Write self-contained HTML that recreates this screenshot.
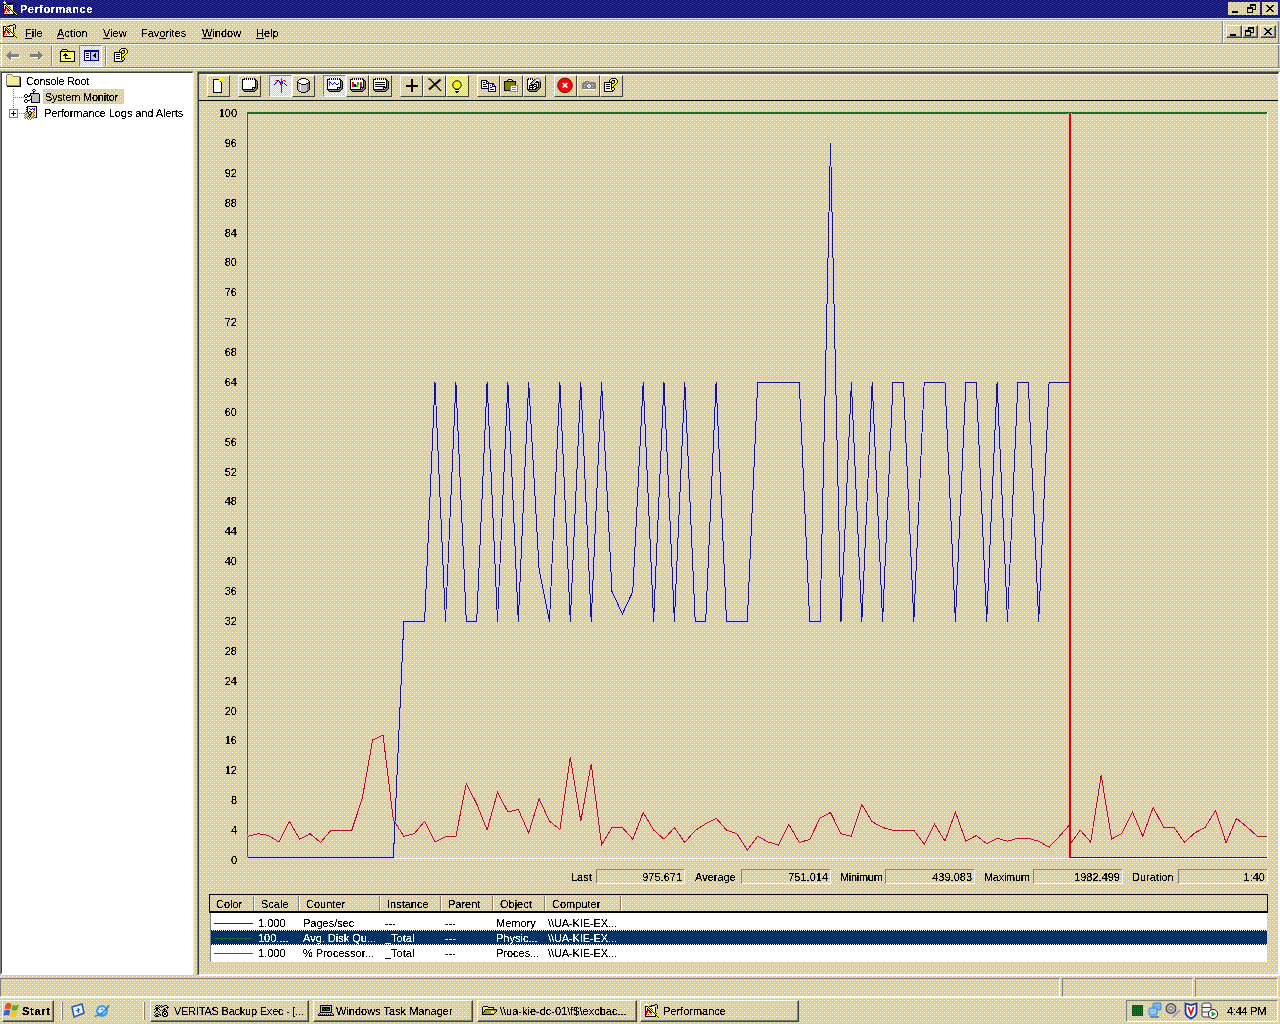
<!DOCTYPE html>
<html><head><meta charset="utf-8"><title>Performance</title>
<style>
html,body{margin:0;padding:0;}
body{width:1280px;height:1024px;overflow:hidden;background:#d4d0c8;font-family:"Liberation Sans",sans-serif;font-size:11px;color:#000;position:relative;}
.abs{position:absolute;}
div{position:absolute;box-sizing:border-box;white-space:nowrap;}
.t{line-height:13px;height:13px;filter:url(#crisp);}
.yl,.sb{filter:url(#crisp);}
u{text-decoration:underline;}
.yl{left:199px;width:38px;text-align:right;height:14px;line-height:14px;}
.raised{border:1px solid;border-color:#fff #404040 #404040 #fff;}
.raised2{border:1px solid;border-color:#fff #808080 #808080 #fff;}
.sunk{border:1px solid;border-color:#808080 #fff #fff #808080;}
.tb{width:23px;height:22px;top:75px;border:1px solid;border-color:#fff #404040 #404040 #fff;}
.tb.p{border-color:#808080 #fff #fff #808080;}
.cap{width:16px;height:13px;border:1px solid;border-color:#fff #404040 #404040 #fff;box-shadow:inset -1px -1px 0 #808080;}
.task{top:1000px;height:22px;border:1px solid;border-color:#fff #404040 #404040 #fff;box-shadow:inset -1px -1px 0 #808080;}
.task .t{top:4px;left:22px;}
.hd{top:896px;height:15px;border-right:1px solid #808080;box-shadow:1px 0 0 #fff;}
.hd .t{top:2px;left:6px;}
.row{left:211px;width:1055px;height:15px;}
.row .t{top:1px;}
.sb{top:869px;height:15px;border:1px solid;border-color:#808080 #fff #fff #808080;text-align:right;padding-right:2px;line-height:14px;}
</style></head>
<body>
<!-- title bar -->
<svg class="abs" style="left:0;top:0" width="1280" height="1024" shape-rendering="crispEdges">
<defs>
<pattern id="dg" width="8" height="8" patternUnits="userSpaceOnUse">
<rect width="8" height="8" fill="#ccc"/>
<path fill="#fff" d="M0 0h1v1h-1zM4 4h1v1h-1z"/>
<path fill="#fcc" d="M2 0h1v1h-1zM6 0h1v1h-1zM2 4h1v1h-1zM6 4h1v1h-1z"/>
<path fill="#ff9" d="M4 0h1v1h-1zM2 2h1v1h-1zM6 2h1v1h-1zM0 4h1v1h-1zM2 6h1v1h-1zM6 6h1v1h-1z"/>
</pattern>
<pattern id="dn" width="4" height="2" patternUnits="userSpaceOnUse">
<rect width="4" height="2" fill="#036"/>
<path fill="#339" d="M0 0h1v1h-1zM2 1h1v1h-1z"/>
<path fill="#006" d="M2 0h1v1h-1zM0 1h1v1h-1z"/>
</pattern>
<pattern id="dc" width="2" height="2" patternUnits="userSpaceOnUse"><rect width="2" height="2" fill="#ccc"/><path fill="#fff" d="M0 0h1v1h-1zM1 1h1v1h-1z"/></pattern>
<pattern id="dy" width="2" height="2" patternUnits="userSpaceOnUse"><rect width="2" height="2" fill="#ccc"/><path fill="#ff9" d="M0 0h1v1h-1zM1 1h1v1h-1z"/></pattern>
<filter id="crisp" x="0" y="0" width="100%" height="100%" color-interpolation-filters="sRGB"><feComponentTransfer><feFuncA type="linear" slope="9" intercept="-3.2"/></feComponentTransfer></filter>
</defs>
<rect width="1280" height="1024" fill="url(#dg)"/>
<rect width="1280" height="18" fill="url(#dn)"/>
</svg>

<div class="t" style="left:20px;top:3px;color:#fff;font-weight:bold;letter-spacing:0.5px;">Performance</div>
<div class="cap" style="left:1228px;top:2px;"></div>
<div class="cap" style="left:1244px;top:2px;"></div>
<div class="cap" style="left:1262px;top:2px;"></div>
<!-- menu bar -->
<div class="t" style="left:25px;top:27px;"><u>F</u>ile</div>
<div class="t" style="left:57px;top:27px;"><u>A</u>ction</div>
<div class="t" style="left:103px;top:27px;"><u>V</u>iew</div>
<div class="t" style="left:141px;top:27px;">Fav<u>o</u>rites</div>
<div class="t" style="left:202px;top:27px;"><u>W</u>indow</div>
<div class="t" style="left:256px;top:27px;"><u>H</u>elp</div>
<div class="cap" style="left:1226px;top:25px;"></div>
<div class="cap" style="left:1242px;top:25px;"></div>
<div class="cap" style="left:1260px;top:25px;"></div>
<div style="left:1222px;top:20px;width:1px;height:23px;background:#808080;"></div><div style="left:1278px;top:20px;width:1px;height:48px;background:#808080;"></div>
<div style="left:1223px;top:20px;width:1px;height:23px;background:#fff;"></div>
<div style="left:0;top:18px;width:1280px;height:1px;background:#ccdcf8;"></div><div style="left:0;top:19px;width:1280px;height:1px;background:#999988;"></div>
<div style="left:1px;top:20px;width:1279px;height:1px;background:#fff;"></div>
<div style="left:1px;top:20px;width:1px;height:23px;background:#fff;"></div>
<div style="left:0;top:43px;width:1280px;height:1px;background:#808080;"></div>
<div style="left:1px;top:44px;width:1279px;height:1px;background:#fff;"></div>
<div style="left:1px;top:44px;width:1px;height:23px;background:#fff;"></div>
<!-- toolbar -->
<div style="left:0;top:67px;width:1280px;height:1px;background:#808080;"></div>
<div style="left:0;top:68px;width:1280px;height:1px;background:#fff;"></div>
<div style="left:79px;top:45px;width:23px;height:22px;border:1px solid;border-color:#808080 #fff #fff #808080;"></div>
<div style="left:51px;top:46px;width:1px;height:20px;background:#808080;"></div><div style="left:52px;top:46px;width:1px;height:20px;background:#fff;"></div>
<div style="left:105px;top:46px;width:1px;height:20px;background:#808080;"></div><div style="left:106px;top:46px;width:1px;height:20px;background:#fff;"></div>
<!-- left pane -->
<div style="left:0;top:71px;width:193px;height:904px;background:#fff;border:2px solid;border-color:#808080 #fff transparent #808080;border-right-width:0;"></div>
<div style="left:1px;top:72px;width:192px;height:902px;border:1px solid;border-color:#404040 #fff #fff #404040;"></div>
<svg class="abs" style="left:0;top:0" width="1280" height="130" shape-rendering="crispEdges">
<rect x="43" y="89" width="81" height="15" fill="url(#dg)"/>
<rect x="1228" y="2" width="16" height="13" fill="url(#dg)"/><rect x="1244" y="2" width="16" height="13" fill="url(#dg)"/><rect x="1262" y="2" width="16" height="13" fill="url(#dg)"/>
<rect x="80" y="46" width="21" height="20" fill="url(#dc)"/>
<rect x="270" y="76" width="21" height="20" fill="url(#dc)"/>
<rect x="324" y="76" width="21" height="20" fill="url(#dc)"/>
<rect x="447" y="76" width="21" height="20" fill="url(#dy)"/>
</svg>
<div class="t" style="left:26px;top:75px;letter-spacing:-0.3px;">Console Root</div>
<div class="t" style="left:45px;top:91px;letter-spacing:-0.25px;">System Monitor</div>
<div class="t" style="left:44px;top:107px;letter-spacing:-0.1px;">Performance Logs and Alerts</div>
<!-- right pane frame -->
<div style="left:197px;top:71px;width:1083px;height:905px;border:2px solid;border-color:#808080 #fff #fff #808080;"></div>
<div style="left:198px;top:72px;width:1081px;height:903px;border:1px solid;border-color:#404040 transparent transparent #404040;border-top-width:2px;"></div>
<div style="left:199px;top:100px;width:1079px;height:1px;background:#000;"></div>
<div style="left:200px;top:74px;width:1078px;height:1px;background:#fff;opacity:0.75;"></div>
<div style="left:193px;top:73px;width:1px;height:900px;background:#fff;opacity:0.6;"></div>
<!-- right toolbar buttons -->
<div class="tb" style="left:207px"></div>
<div class="tb" style="left:238px"></div>
<div class="tb p" style="left:269px"></div>
<div class="tb" style="left:292px"></div>
<div class="tb p" style="left:323px"></div>
<div class="tb" style="left:346px"></div>
<div class="tb" style="left:369px"></div>
<div class="tb" style="left:400px"></div>
<div class="tb" style="left:423px"></div>
<div class="tb" style="left:446px;"></div>
<div class="tb" style="left:477px"></div>
<div class="tb" style="left:500px"></div>
<div class="tb" style="left:523px"></div>
<div class="tb" style="left:554px"></div>
<div class="tb" style="left:577px"></div>
<div class="tb" style="left:600px"></div>
<!-- chart -->
<div class="yl" style="top:853px">0</div><div class="yl" style="top:823px">4</div><div class="yl" style="top:793px">8</div><div class="yl" style="top:763px">12</div><div class="yl" style="top:733px">16</div><div class="yl" style="top:704px">20</div><div class="yl" style="top:674px">24</div><div class="yl" style="top:644px">28</div><div class="yl" style="top:614px">32</div><div class="yl" style="top:584px">36</div><div class="yl" style="top:554px">40</div><div class="yl" style="top:524px">44</div><div class="yl" style="top:494px">48</div><div class="yl" style="top:465px">52</div><div class="yl" style="top:435px">56</div><div class="yl" style="top:405px">60</div><div class="yl" style="top:375px">64</div><div class="yl" style="top:345px">68</div><div class="yl" style="top:315px">72</div><div class="yl" style="top:285px">76</div><div class="yl" style="top:255px">80</div><div class="yl" style="top:226px">84</div><div class="yl" style="top:196px">88</div><div class="yl" style="top:166px">92</div><div class="yl" style="top:136px">96</div><div class="yl" style="top:106px">100</div>
<svg class="abs" style="left:0;top:0" width="1280" height="1024" viewBox="0 0 1280 1024" shape-rendering="crispEdges">
<rect x="247" y="112" width="1" height="746" fill="#5a4a42"/>
<rect x="247" y="858" width="1021" height="1" fill="#fff"/>
<rect x="1267" y="112" width="1" height="747" fill="#fff"/>
<rect x="248" y="112" width="1019" height="2" fill="#1c6a30"/>
<polyline points="247.5,836.3 258.1,833.75 268.5,835.5 278.9,842 289.3,821.25 299.7,839.25 310.1,833.75 320.6,842.5 331.0,830.25 341.4,830.25 351.8,830.25 362.2,798.75 372.6,740 383.0,735 393.4,820 403.8,836.25 414.2,833.75 424.6,821.25 435.0,842 445.5,836.75 455.9,836.25 466.3,783.75 476.7,803.75 487.1,830 497.5,792.5 507.9,812 518.3,809.5 528.7,833 539.1,798.75 549.5,821.25 559.9,829.5 570.3,757.5 580.8,821.25 591.2,763.75 601.6,845 612.0,827.5 622.4,827.5 632.8,839.25 643.2,812.5 653.6,830 664.0,839.25 674.4,827.5 684.8,842.5 695.2,830.5 705.7,823.75 716.1,818.25 726.5,830 736.9,833.75 747.3,850 757.7,836.25 768.1,842 778.5,845 788.9,824.5 799.3,842.5 809.7,839.5 820.1,818 830.5,812.5 841.0,833.75 851.4,836.25 861.8,804.5 872.2,821.75 882.6,827.5 893.0,830.25 903.4,830.25 913.8,830.25 924.2,844.25 934.6,824.25 945.0,841.25 955.4,812 965.9,841.25 976.3,835.5 986.7,843.75 997.1,838.25 1007.5,841.25 1017.9,838.25 1028.3,838.25 1038.7,841.25 1049.1,847.25 1059.5,836.25 1069.5,825" fill="none" stroke="#ffc4c4" stroke-width="3" opacity="0.75" shape-rendering="auto"/>
<polyline points="1071,842.8 1080.3,830.25 1090.7,842.25 1101.2,775.3 1111.6,839 1122.0,833.4 1132.4,811.9 1142.8,836.25 1153.2,807.2 1163.6,827.25 1174.0,827.25 1184.4,842.25 1194.8,833 1205.2,827.25 1215.6,810.6 1226.1,842.8 1236.5,818.4 1246.9,826.9 1257.3,836.25 1267,836.6" fill="none" stroke="#ffc4c4" stroke-width="3" opacity="0.75" shape-rendering="auto"/>
<polyline points="247.5,857.5 258.1,857.5 268.5,857.5 278.9,857.5 289.3,857.5 299.7,857.5 310.1,857.5 320.6,857.5 331.0,857.5 341.4,857.5 351.8,857.5 362.2,857.5 372.6,857.5 383.0,857.5 393.4,857.5 403.8,621.5 414.2,621.5 424.6,621.5 435.0,382.4 445.5,621.5 455.9,382.4 466.3,621.5 476.7,621.5 487.1,382.4 497.5,621.5 507.9,382.4 518.3,621.5 528.7,382.4 539.1,569.2 549.5,621.5 559.9,382.4 570.3,621.5 580.8,382.4 591.2,621.5 601.6,382.4 612.0,591.6 622.4,614.0 632.8,591.6 643.2,382.4 653.6,621.5 664.0,382.4 674.4,621.5 684.8,382.4 695.2,621.5 705.7,621.5 716.1,382.4 726.5,621.5 736.9,621.5 747.3,621.5 757.7,382.4 768.1,382.4 778.5,382.4 788.9,382.4 799.3,382.4 809.7,621.5 820.1,621.5 830.5,143.4 841.0,621.5 851.4,382.4 861.8,621.5 872.2,382.4 882.6,621.5 893.0,382.4 903.4,382.4 913.8,621.5 924.2,382.4 934.6,382.4 945.0,382.4 955.4,621.5 965.9,382.4 976.3,382.4 986.7,621.5 997.1,382.4 1007.5,621.5 1017.9,382.4 1028.3,382.4 1038.7,621.5 1049.1,382.4 1059.5,382.4 1070,382.4" fill="none" stroke="#ccccff" stroke-width="3" opacity="0.8" shape-rendering="auto"/>
<rect x="1068" y="113" width="4" height="745" fill="#ffb8b8" opacity="0.8"/>
<polyline points="247.5,836.3 258.1,833.75 268.5,835.5 278.9,842 289.3,821.25 299.7,839.25 310.1,833.75 320.6,842.5 331.0,830.25 341.4,830.25 351.8,830.25 362.2,798.75 372.6,740 383.0,735 393.4,820 403.8,836.25 414.2,833.75 424.6,821.25 435.0,842 445.5,836.75 455.9,836.25 466.3,783.75 476.7,803.75 487.1,830 497.5,792.5 507.9,812 518.3,809.5 528.7,833 539.1,798.75 549.5,821.25 559.9,829.5 570.3,757.5 580.8,821.25 591.2,763.75 601.6,845 612.0,827.5 622.4,827.5 632.8,839.25 643.2,812.5 653.6,830 664.0,839.25 674.4,827.5 684.8,842.5 695.2,830.5 705.7,823.75 716.1,818.25 726.5,830 736.9,833.75 747.3,850 757.7,836.25 768.1,842 778.5,845 788.9,824.5 799.3,842.5 809.7,839.5 820.1,818 830.5,812.5 841.0,833.75 851.4,836.25 861.8,804.5 872.2,821.75 882.6,827.5 893.0,830.25 903.4,830.25 913.8,830.25 924.2,844.25 934.6,824.25 945.0,841.25 955.4,812 965.9,841.25 976.3,835.5 986.7,843.75 997.1,838.25 1007.5,841.25 1017.9,838.25 1028.3,838.25 1038.7,841.25 1049.1,847.25 1059.5,836.25 1069.5,825" fill="none" stroke="#a81424" stroke-width="1" shape-rendering="crispEdges"/>
<polyline points="1071,842.8 1080.3,830.25 1090.7,842.25 1101.2,775.3 1111.6,839 1122.0,833.4 1132.4,811.9 1142.8,836.25 1153.2,807.2 1163.6,827.25 1174.0,827.25 1184.4,842.25 1194.8,833 1205.2,827.25 1215.6,810.6 1226.1,842.8 1236.5,818.4 1246.9,826.9 1257.3,836.25 1267,836.6" fill="none" stroke="#a81424" stroke-width="1" shape-rendering="crispEdges"/>
<polyline points="247.5,857.5 258.1,857.5 268.5,857.5 278.9,857.5 289.3,857.5 299.7,857.5 310.1,857.5 320.6,857.5 331.0,857.5 341.4,857.5 351.8,857.5 362.2,857.5 372.6,857.5 383.0,857.5 393.4,857.5 403.8,621.5 414.2,621.5 424.6,621.5 435.0,382.4 445.5,621.5 455.9,382.4 466.3,621.5 476.7,621.5 487.1,382.4 497.5,621.5 507.9,382.4 518.3,621.5 528.7,382.4 539.1,569.2 549.5,621.5 559.9,382.4 570.3,621.5 580.8,382.4 591.2,621.5 601.6,382.4 612.0,591.6 622.4,614.0 632.8,591.6 643.2,382.4 653.6,621.5 664.0,382.4 674.4,621.5 684.8,382.4 695.2,621.5 705.7,621.5 716.1,382.4 726.5,621.5 736.9,621.5 747.3,621.5 757.7,382.4 768.1,382.4 778.5,382.4 788.9,382.4 799.3,382.4 809.7,621.5 820.1,621.5 830.5,143.4 841.0,621.5 851.4,382.4 861.8,621.5 872.2,382.4 882.6,621.5 893.0,382.4 903.4,382.4 913.8,621.5 924.2,382.4 934.6,382.4 945.0,382.4 955.4,621.5 965.9,382.4 976.3,382.4 986.7,621.5 997.1,382.4 1007.5,621.5 1017.9,382.4 1028.3,382.4 1038.7,621.5 1049.1,382.4 1059.5,382.4 1070,382.4" fill="none" stroke="#141488" stroke-width="1" shape-rendering="crispEdges"/>
<rect x="1071" y="857" width="196" height="1" fill="#141488"/>
<rect x="1069" y="113" width="2" height="745" fill="#cc0808"/>
</svg>
<!-- stats row -->
<div class="t" style="left:571px;top:871px;">Last</div>
<div class="sb" style="left:596px;width:89px;">975.671</div>
<div class="t" style="left:695px;top:871px;">Average</div>
<div class="sb" style="left:741px;width:90px;">751.014</div>
<div class="t" style="left:840px;top:871px;letter-spacing:-0.3px;">Minimum</div>
<div class="sb" style="left:885px;width:90px;">439.083</div>
<div class="t" style="left:984px;top:871px;letter-spacing:-0.3px;">Maximum</div>
<div class="sb" style="left:1033px;width:90px;">1982.499</div>
<div class="t" style="left:1132px;top:871px;">Duration</div>
<div class="sb" style="left:1178px;width:90px;">1:40</div>
<!-- legend -->
<div style="left:209px;top:894px;width:1059px;height:19px;border:1px solid #000;border-bottom:2px solid #000;"></div>
<div class="hd" style="left:210px;width:44px;"><div class="t">Color</div></div>
<div class="hd" style="left:255px;width:44px;"><div class="t">Scale</div></div>
<div class="hd" style="left:300px;width:80px;"><div class="t">Counter</div></div>
<div class="hd" style="left:381px;width:60px;"><div class="t">Instance</div></div>
<div class="hd" style="left:442px;width:51px;"><div class="t">Parent</div></div>
<div class="hd" style="left:494px;width:51px;"><div class="t">Object</div></div>
<div class="hd" style="left:546px;width:75px;"><div class="t">Computer</div></div>
<div style="left:210px;top:913px;width:1057px;height:49px;background:#fff;border-left:1px solid #808080;"></div>
<div class="row" style="top:916px;">
 <div style="left:3px;top:7px;width:39px;height:1px;background:#1c1c8c;"></div>
 <div class="t" style="left:47px;">1.000</div><div class="t" style="left:92px;">Pages/sec</div><div class="t" style="left:174px;">---</div><div class="t" style="left:234px;">---</div><div class="t" style="left:285px;">Memory</div><div class="t" style="left:337px;letter-spacing:-0.1px;">\\UA-KIE-EX...</div>
</div>
<svg class="abs" style="left:211px;top:930px" width="1056" height="15" shape-rendering="crispEdges"><defs><pattern id="dd" width="2" height="1" patternUnits="userSpaceOnUse"><rect width="1" height="1" fill="#000"/><rect x="1" width="1" height="1" fill="#fff"/></pattern></defs><rect width="1056" height="15" fill="url(#dn)"/><rect width="1056" height="1" fill="url(#dd)"/><rect y="14" width="1056" height="1" fill="url(#dd)"/></svg>
<div class="row" style="top:930px;color:#fff;height:15px;">
 <div style="left:3px;top:8px;width:39px;height:1px;background:#1c6a30;"></div>
 <div class="t" style="left:47px;top:2px;">100....</div><div class="t" style="left:92px;top:2px;">Avg. Disk Qu...</div><div class="t" style="left:174px;top:2px;">_Total</div><div class="t" style="left:234px;top:2px;">---</div><div class="t" style="left:285px;top:2px;">Physic...</div><div class="t" style="left:337px;top:2px;letter-spacing:-0.1px;">\\UA-KIE-EX...</div>
</div>
<div class="row" style="top:946px;">
 <div style="left:3px;top:7px;width:39px;height:1px;background:#b02028;"></div>
 <div class="t" style="left:47px;">1.000</div><div class="t" style="left:92px;">% Processor...</div><div class="t" style="left:174px;">_Total</div><div class="t" style="left:234px;">---</div><div class="t" style="left:285px;">Proces...</div><div class="t" style="left:337px;letter-spacing:-0.1px;">\\UA-KIE-EX...</div>
</div>
<svg class="abs" style="left:1px;top:1px" width="16" height="15" shape-rendering="crispEdges"><path fill="#fff" d="M3 0h1v1h-1zM2 1h1v1h-1zM4 1h1v1h-1zM3 2h1v1h-1zM3 4h2v1h-2zM7 4h5v1h-5zM3 5h1v1h-1zM5 5h1v1h-1zM9 5h3v1h-3zM3 6h1v1h-1zM6 6h1v1h-1zM10 6h2v1h-2zM3 7h1v1h-1zM7 7h1v1h-1zM10 7h2v1h-2zM5 8h1v1h-1zM8 8h1v1h-1zM11 8h1v1h-1zM5 9h1v1h-1zM9 9h1v1h-1zM4 10h3v1h-3zM8 10h3v1h-3zM4 11h1v1h-1zM6 11h2v1h-2zM9 11h3v1h-3zM3 12h9v1h-9z"/><path fill="#ffc0c0" d="M3 1h1v1h-1z"/><path fill="#000" d="M12 1h2v1h-2zM8 2h4v1h-4zM14 2h1v1h-1zM2 3h3v1h-3zM6 3h3v1h-3zM14 3h1v1h-1zM2 4h1v1h-1zM5 4h1v1h-1zM12 4h1v1h-1zM14 4h1v1h-1zM2 5h1v1h-1zM6 5h1v1h-1zM12 5h1v1h-1zM14 5h1v1h-1zM2 6h1v1h-1zM7 6h1v1h-1zM12 6h1v1h-1zM2 7h1v1h-1zM8 7h1v1h-1zM12 7h1v1h-1zM2 8h1v1h-1zM9 8h1v1h-1zM12 8h1v1h-1zM2 9h1v1h-1zM10 9h1v1h-1zM12 9h1v1h-1zM2 10h1v1h-1zM11 10h1v1h-1zM13 10h1v1h-1zM2 11h1v1h-1zM12 11h1v1h-1zM2 12h1v1h-1zM12 12h2v1h-2zM2 13h11v1h-11zM14 13h1v1h-1zM15 14h1v1h-1z"/><path fill="#ffff00" d="M4 2h1v1h-1zM5 3h1v1h-1zM6 4h1v1h-1zM7 5h1v1h-1zM8 6h1v1h-1zM9 7h1v1h-1zM10 8h1v1h-1zM11 9h1v1h-1zM12 10h1v1h-1zM13 11h1v1h-1zM14 12h1v1h-1zM15 13h1v1h-1z"/><path fill="#000080" d="M4 5h1v1h-1zM4 6h1v1h-1zM4 7h1v1h-1zM6 7h1v1h-1zM3 8h1v1h-1zM7 8h1v1h-1zM8 9h1v1h-1z"/><path fill="#ff0000" d="M8 5h1v1h-1zM5 6h1v1h-1zM9 6h1v1h-1zM5 7h1v1h-1zM4 8h1v1h-1zM6 8h1v1h-1zM3 9h2v1h-2zM6 9h2v1h-2zM3 10h1v1h-1zM7 10h1v1h-1zM3 11h1v1h-1zM5 11h1v1h-1zM8 11h1v1h-1z"/></svg>
<svg class="abs" style="left:1px;top:23px" width="16" height="15" shape-rendering="crispEdges"><path fill="#fff" d="M3 0h1v1h-1zM2 1h1v1h-1zM4 1h1v1h-1zM3 2h1v1h-1zM3 4h2v1h-2zM7 4h5v1h-5zM3 5h1v1h-1zM5 5h1v1h-1zM9 5h3v1h-3zM3 6h1v1h-1zM6 6h1v1h-1zM10 6h2v1h-2zM3 7h1v1h-1zM7 7h1v1h-1zM10 7h2v1h-2zM5 8h1v1h-1zM8 8h1v1h-1zM11 8h1v1h-1zM5 9h1v1h-1zM9 9h1v1h-1zM4 10h3v1h-3zM8 10h3v1h-3zM4 11h1v1h-1zM6 11h2v1h-2zM9 11h3v1h-3zM3 12h9v1h-9z"/><path fill="#ffc0c0" d="M3 1h1v1h-1z"/><path fill="#000" d="M12 1h2v1h-2zM8 2h4v1h-4zM14 2h1v1h-1zM2 3h3v1h-3zM6 3h3v1h-3zM14 3h1v1h-1zM2 4h1v1h-1zM5 4h1v1h-1zM12 4h1v1h-1zM14 4h1v1h-1zM2 5h1v1h-1zM6 5h1v1h-1zM12 5h1v1h-1zM14 5h1v1h-1zM2 6h1v1h-1zM7 6h1v1h-1zM12 6h1v1h-1zM2 7h1v1h-1zM8 7h1v1h-1zM12 7h1v1h-1zM2 8h1v1h-1zM9 8h1v1h-1zM12 8h1v1h-1zM2 9h1v1h-1zM10 9h1v1h-1zM12 9h1v1h-1zM2 10h1v1h-1zM11 10h1v1h-1zM13 10h1v1h-1zM2 11h1v1h-1zM12 11h1v1h-1zM2 12h1v1h-1zM12 12h2v1h-2zM2 13h11v1h-11zM14 13h1v1h-1zM15 14h1v1h-1z"/><path fill="#ffff00" d="M4 2h1v1h-1zM5 3h1v1h-1zM6 4h1v1h-1zM7 5h1v1h-1zM8 6h1v1h-1zM9 7h1v1h-1zM10 8h1v1h-1zM11 9h1v1h-1zM12 10h1v1h-1zM13 11h1v1h-1zM14 12h1v1h-1zM15 13h1v1h-1z"/><path fill="#000080" d="M4 5h1v1h-1zM4 6h1v1h-1zM4 7h1v1h-1zM6 7h1v1h-1zM3 8h1v1h-1zM7 8h1v1h-1zM8 9h1v1h-1z"/><path fill="#ff0000" d="M8 5h1v1h-1zM5 6h1v1h-1zM9 6h1v1h-1zM5 7h1v1h-1zM4 8h1v1h-1zM6 8h1v1h-1zM3 9h2v1h-2zM6 9h2v1h-2zM3 10h1v1h-1zM7 10h1v1h-1zM3 11h1v1h-1zM5 11h1v1h-1zM8 11h1v1h-1z"/></svg>
<svg class="abs" style="left:643px;top:1003px" width="16" height="15" shape-rendering="crispEdges"><path fill="#fff" d="M3 0h1v1h-1zM2 1h1v1h-1zM4 1h1v1h-1zM3 2h1v1h-1zM3 4h2v1h-2zM7 4h5v1h-5zM3 5h1v1h-1zM5 5h1v1h-1zM9 5h3v1h-3zM3 6h1v1h-1zM6 6h1v1h-1zM10 6h2v1h-2zM3 7h1v1h-1zM7 7h1v1h-1zM10 7h2v1h-2zM5 8h1v1h-1zM8 8h1v1h-1zM11 8h1v1h-1zM5 9h1v1h-1zM9 9h1v1h-1zM4 10h3v1h-3zM8 10h3v1h-3zM4 11h1v1h-1zM6 11h2v1h-2zM9 11h3v1h-3zM3 12h9v1h-9z"/><path fill="#ffc0c0" d="M3 1h1v1h-1z"/><path fill="#000" d="M12 1h2v1h-2zM8 2h4v1h-4zM14 2h1v1h-1zM2 3h3v1h-3zM6 3h3v1h-3zM14 3h1v1h-1zM2 4h1v1h-1zM5 4h1v1h-1zM12 4h1v1h-1zM14 4h1v1h-1zM2 5h1v1h-1zM6 5h1v1h-1zM12 5h1v1h-1zM14 5h1v1h-1zM2 6h1v1h-1zM7 6h1v1h-1zM12 6h1v1h-1zM2 7h1v1h-1zM8 7h1v1h-1zM12 7h1v1h-1zM2 8h1v1h-1zM9 8h1v1h-1zM12 8h1v1h-1zM2 9h1v1h-1zM10 9h1v1h-1zM12 9h1v1h-1zM2 10h1v1h-1zM11 10h1v1h-1zM13 10h1v1h-1zM2 11h1v1h-1zM12 11h1v1h-1zM2 12h1v1h-1zM12 12h2v1h-2zM2 13h11v1h-11zM14 13h1v1h-1zM15 14h1v1h-1z"/><path fill="#ffff00" d="M4 2h1v1h-1zM5 3h1v1h-1zM6 4h1v1h-1zM7 5h1v1h-1zM8 6h1v1h-1zM9 7h1v1h-1zM10 8h1v1h-1zM11 9h1v1h-1zM12 10h1v1h-1zM13 11h1v1h-1zM14 12h1v1h-1zM15 13h1v1h-1z"/><path fill="#000080" d="M4 5h1v1h-1zM4 6h1v1h-1zM4 7h1v1h-1zM6 7h1v1h-1zM3 8h1v1h-1zM7 8h1v1h-1zM8 9h1v1h-1z"/><path fill="#ff0000" d="M8 5h1v1h-1zM5 6h1v1h-1zM9 6h1v1h-1zM5 7h1v1h-1zM4 8h1v1h-1zM6 8h1v1h-1zM3 9h2v1h-2zM6 9h2v1h-2zM3 10h1v1h-1zM7 10h1v1h-1zM3 11h1v1h-1zM5 11h1v1h-1zM8 11h1v1h-1z"/></svg>
<svg class="abs" style="left:6px;top:51px" width="14" height="10" shape-rendering="crispEdges"><path fill="#808080" d="M4 0h1v1h-1zM3 1h2v1h-2zM2 2h3v1h-3zM1 3h12v1h-12zM0 4h13v1h-13zM1 5h12v1h-12zM2 6h3v1h-3zM3 7h2v1h-2zM4 8h1v1h-1z"/><path fill="#fff" d="M13 4h1v1h-1zM13 5h1v1h-1zM5 6h9v1h-9zM5 7h1v1h-1zM5 8h1v1h-1zM5 9h1v1h-1z"/></svg>
<svg class="abs" style="left:29px;top:51px" width="14" height="10" shape-rendering="crispEdges"><path fill="#808080" d="M9 0h1v1h-1zM9 1h2v1h-2zM9 2h3v1h-3zM1 3h12v1h-12zM1 4h13v1h-13zM1 5h12v1h-12zM9 6h3v1h-3zM9 7h2v1h-2zM9 8h1v1h-1z"/><path fill="#fff" d="M13 5h1v1h-1zM2 6h7v1h-7zM12 6h1v1h-1zM11 7h1v1h-1zM10 8h1v1h-1zM9 9h1v1h-1z"/></svg>
<svg class="abs" style="left:60px;top:49px" width="16" height="13" shape-rendering="crispEdges"><path fill="#000" d="M2 0h5v1h-5zM1 1h1v1h-1zM7 1h1v1h-1zM0 2h15v1h-15zM0 3h1v1h-1zM14 3h1v1h-1zM0 4h1v1h-1zM5 4h1v1h-1zM14 4h1v1h-1zM0 5h1v1h-1zM4 5h3v1h-3zM14 5h1v1h-1zM0 6h1v1h-1zM3 6h5v1h-5zM14 6h1v1h-1zM0 7h1v1h-1zM5 7h1v1h-1zM14 7h1v1h-1zM0 8h1v1h-1zM5 8h1v1h-1zM14 8h1v1h-1zM0 9h1v1h-1zM5 9h6v1h-6zM14 9h1v1h-1zM0 10h1v1h-1zM14 10h1v1h-1zM0 11h1v1h-1zM14 11h1v1h-1zM0 12h15v1h-15z"/><path fill="#fbfb78" d="M2 1h5v1h-5zM1 3h13v1h-13zM1 4h4v1h-4zM6 4h8v1h-8zM1 5h3v1h-3zM7 5h7v1h-7zM1 6h2v1h-2zM8 6h6v1h-6zM1 7h4v1h-4zM6 7h8v1h-8zM1 8h4v1h-4zM6 8h8v1h-8zM1 9h4v1h-4zM11 9h3v1h-3zM1 10h13v1h-13zM1 11h13v1h-13z"/></svg>
<svg class="abs" style="left:84px;top:50px" width="15" height="11" shape-rendering="crispEdges"><path fill="#000080" d="M0 0h15v1h-15zM0 1h15v1h-15zM0 2h1v1h-1zM6 2h1v1h-1zM14 2h1v1h-1zM0 3h1v1h-1zM6 3h1v1h-1zM14 3h1v1h-1zM0 4h1v1h-1zM6 4h1v1h-1zM14 4h1v1h-1zM0 5h1v1h-1zM6 5h1v1h-1zM14 5h1v1h-1zM0 6h1v1h-1zM6 6h1v1h-1zM14 6h1v1h-1zM0 7h1v1h-1zM6 7h1v1h-1zM14 7h1v1h-1zM0 8h1v1h-1zM6 8h1v1h-1zM14 8h1v1h-1zM0 9h1v1h-1zM6 9h1v1h-1zM14 9h1v1h-1zM0 10h15v1h-15z"/><path fill="#fff" d="M1 2h5v1h-5zM1 3h1v1h-1zM5 3h1v1h-1zM1 4h5v1h-5zM1 5h1v1h-1zM5 5h1v1h-1zM1 6h5v1h-5zM1 7h1v1h-1zM5 7h1v1h-1zM1 8h5v1h-5zM1 9h5v1h-5z"/><path fill="#c4c4dc" d="M7 2h7v1h-7zM7 3h4v1h-4zM12 3h2v1h-2zM7 4h3v1h-3zM12 4h2v1h-2zM7 5h2v1h-2zM12 5h2v1h-2zM7 6h3v1h-3zM12 6h2v1h-2zM7 7h4v1h-4zM12 7h2v1h-2zM7 8h7v1h-7zM7 9h7v1h-7z"/><path fill="#000" d="M2 3h3v1h-3zM11 3h1v1h-1zM10 4h2v1h-2zM2 5h3v1h-3zM9 5h3v1h-3zM10 6h2v1h-2zM2 7h3v1h-3zM11 7h1v1h-1z"/></svg>
<svg class="abs" style="left:114px;top:48px" width="16" height="14" shape-rendering="crispEdges"><path fill="#000" d="M7 0h5v1h-5zM6 1h1v1h-1zM12 1h1v1h-1zM5 2h1v1h-1zM8 2h3v1h-3zM13 2h1v1h-1zM5 3h1v1h-1zM7 3h1v1h-1zM10 3h1v1h-1zM13 3h1v1h-1zM0 4h8v1h-8zM10 4h1v1h-1zM13 4h1v1h-1zM0 5h1v1h-1zM7 5h3v1h-3zM12 5h1v1h-1zM0 6h1v1h-1zM2 6h4v1h-4zM7 6h1v1h-1zM11 6h1v1h-1zM0 7h1v1h-1zM7 7h1v1h-1zM10 7h1v1h-1zM0 8h1v1h-1zM2 8h4v1h-4zM7 8h1v1h-1zM9 8h1v1h-1zM0 9h1v1h-1zM7 9h3v1h-3zM0 10h1v1h-1zM2 10h4v1h-4zM7 10h1v1h-1zM10 10h1v1h-1zM0 11h1v1h-1zM7 11h1v1h-1zM10 11h1v1h-1zM0 12h1v1h-1zM8 12h2v1h-2zM0 13h9v1h-9z"/><path fill="#ffff00" d="M7 1h5v1h-5zM6 2h2v1h-2zM11 2h2v1h-2zM6 3h1v1h-1zM11 3h2v1h-2zM11 4h2v1h-2zM10 5h2v1h-2zM8 6h3v1h-3zM8 7h2v1h-2zM8 8h1v1h-1zM8 10h2v1h-2zM8 11h2v1h-2z"/><path fill="#fff" d="M1 5h6v1h-6zM1 6h1v1h-1zM6 6h1v1h-1zM1 7h6v1h-6zM1 8h1v1h-1zM6 8h1v1h-1zM1 9h6v1h-6zM1 10h1v1h-1zM6 10h1v1h-1zM1 11h6v1h-6zM1 12h7v1h-7z"/></svg>
<svg class="abs" style="left:604px;top:78px" width="16" height="14" shape-rendering="crispEdges"><path fill="#000" d="M7 0h5v1h-5zM6 1h1v1h-1zM12 1h1v1h-1zM5 2h1v1h-1zM8 2h3v1h-3zM13 2h1v1h-1zM5 3h1v1h-1zM7 3h1v1h-1zM10 3h1v1h-1zM13 3h1v1h-1zM0 4h8v1h-8zM10 4h1v1h-1zM13 4h1v1h-1zM0 5h1v1h-1zM7 5h3v1h-3zM12 5h1v1h-1zM0 6h1v1h-1zM2 6h4v1h-4zM7 6h1v1h-1zM11 6h1v1h-1zM0 7h1v1h-1zM7 7h1v1h-1zM10 7h1v1h-1zM0 8h1v1h-1zM2 8h4v1h-4zM7 8h1v1h-1zM9 8h1v1h-1zM0 9h1v1h-1zM7 9h3v1h-3zM0 10h1v1h-1zM2 10h4v1h-4zM7 10h1v1h-1zM10 10h1v1h-1zM0 11h1v1h-1zM7 11h1v1h-1zM10 11h1v1h-1zM0 12h1v1h-1zM8 12h2v1h-2zM0 13h9v1h-9z"/><path fill="#ffff00" d="M7 1h5v1h-5zM6 2h2v1h-2zM11 2h2v1h-2zM6 3h1v1h-1zM11 3h2v1h-2zM11 4h2v1h-2zM10 5h2v1h-2zM8 6h3v1h-3zM8 7h2v1h-2zM8 8h1v1h-1zM8 10h2v1h-2zM8 11h2v1h-2z"/><path fill="#fff" d="M1 5h6v1h-6zM1 6h1v1h-1zM6 6h1v1h-1zM1 7h6v1h-6zM1 8h1v1h-1zM6 8h1v1h-1zM1 9h6v1h-6zM1 10h1v1h-1zM6 10h1v1h-1zM1 11h6v1h-6zM1 12h7v1h-7z"/></svg>
<svg class="abs" style="left:6px;top:74px" width="15" height="13" shape-rendering="crispEdges"><path fill="#808080" d="M1 0h5v1h-5zM0 1h1v1h-1zM6 1h1v1h-1zM0 2h1v1h-1zM7 2h7v1h-7zM0 3h1v1h-1zM13 3h1v1h-1zM0 4h1v1h-1zM13 4h1v1h-1zM0 5h1v1h-1zM13 5h1v1h-1zM0 6h1v1h-1zM13 6h1v1h-1zM0 7h1v1h-1zM13 7h1v1h-1zM0 8h1v1h-1zM13 8h1v1h-1zM0 9h1v1h-1zM13 9h1v1h-1zM0 10h1v1h-1zM13 10h1v1h-1zM0 11h14v1h-14z"/><path fill="#f4ee98" d="M1 1h5v1h-5zM1 2h6v1h-6zM1 3h12v1h-12zM1 4h12v1h-12zM1 5h12v1h-12zM1 6h12v1h-12zM1 7h12v1h-12zM1 8h12v1h-12zM1 9h12v1h-12zM1 10h12v1h-12z"/><path fill="#000" d="M14 3h1v1h-1zM14 4h1v1h-1zM14 5h1v1h-1zM14 6h1v1h-1zM14 7h1v1h-1zM14 8h1v1h-1zM14 9h1v1h-1zM14 10h1v1h-1zM14 11h1v1h-1zM1 12h14v1h-14z"/></svg>
<svg class="abs" style="left:24px;top:89px" width="16" height="14" shape-rendering="crispEdges"><path fill="#000" d="M9 0h2v1h-2zM8 1h1v1h-1zM11 1h1v1h-1zM9 2h2v1h-2zM9 3h1v1h-1zM6 4h9v1h-9zM1 5h2v1h-2zM6 5h1v1h-1zM15 5h1v1h-1zM0 6h1v1h-1zM3 6h1v1h-1zM5 6h2v1h-2zM15 6h1v1h-1zM0 7h1v1h-1zM3 7h3v1h-3zM7 7h1v1h-1zM15 7h1v1h-1zM1 8h2v1h-2zM7 8h1v1h-1zM15 8h1v1h-1zM7 9h1v1h-1zM15 9h1v1h-1zM1 10h2v1h-2zM6 10h2v1h-2zM15 10h1v1h-1zM0 11h1v1h-1zM3 11h3v1h-3zM7 11h1v1h-1zM15 11h1v1h-1zM0 12h1v1h-1zM3 12h1v1h-1zM7 12h1v1h-1zM15 12h1v1h-1zM1 13h2v1h-2zM7 13h9v1h-9z"/><path fill="#fff" d="M9 1h2v1h-2zM1 6h2v1h-2zM1 7h2v1h-2zM1 11h2v1h-2zM1 12h2v1h-2z"/><path fill="#c0c0c0" d="M7 5h8v1h-8zM7 6h8v1h-8zM8 7h7v1h-7zM8 8h7v1h-7zM8 9h7v1h-7zM8 10h7v1h-7zM8 11h7v1h-7zM8 12h7v1h-7z"/></svg>
<svg class="abs" style="left:24px;top:106px" width="13" height="14" shape-rendering="crispEdges"><path fill="#000" d="M3 0h10v1h-10zM2 1h2v1h-2zM12 1h1v1h-1zM3 2h1v1h-1zM12 2h1v1h-1zM2 3h2v1h-2zM12 3h1v1h-1zM3 4h1v1h-1zM12 4h1v1h-1zM2 5h2v1h-2zM5 5h2v1h-2zM12 5h1v1h-1zM4 6h1v1h-1zM7 6h1v1h-1zM12 6h1v1h-1zM4 7h1v1h-1zM7 7h1v1h-1zM12 7h1v1h-1zM5 8h2v1h-2zM12 8h1v1h-1zM5 9h1v1h-1zM12 9h1v1h-1zM4 10h1v1h-1zM6 10h1v1h-1zM12 10h1v1h-1zM5 11h1v1h-1zM11 11h2v1h-2z"/><path fill="#fff" d="M4 1h8v1h-8zM4 2h1v1h-1zM6 2h2v1h-2zM9 2h1v1h-1zM11 2h1v1h-1zM4 3h2v1h-2zM8 3h1v1h-1zM11 3h1v1h-1zM4 4h6v1h-6zM11 4h1v1h-1zM4 5h1v1h-1zM7 5h2v1h-2zM10 5h2v1h-2zM9 6h1v1h-1zM11 6h1v1h-1zM10 7h2v1h-2zM10 8h2v1h-2zM11 9h1v1h-1zM5 10h1v1h-1zM10 10h2v1h-2z"/><path fill="#0000ff" d="M5 2h1v1h-1zM8 2h1v1h-1zM10 2h1v1h-1zM6 3h2v1h-2zM9 3h1v1h-1z"/><path fill="#a000a0" d="M10 3h1v1h-1z"/><path fill="#ff0000" d="M10 4h1v1h-1zM9 5h1v1h-1zM10 6h1v1h-1z"/><path fill="#808000" d="M1 6h1v1h-1zM3 6h1v1h-1zM8 6h1v1h-1zM0 7h1v1h-1zM2 7h1v1h-1zM9 7h1v1h-1zM1 8h1v1h-1zM9 8h1v1h-1zM0 9h1v1h-1zM4 9h1v1h-1zM6 9h1v1h-1zM10 9h1v1h-1zM1 10h1v1h-1zM9 10h1v1h-1zM0 11h1v1h-1zM2 11h1v1h-1zM8 11h1v1h-1zM10 11h1v1h-1zM1 12h1v1h-1zM3 12h1v1h-1zM7 12h1v1h-1zM9 12h1v1h-1zM4 13h1v1h-1zM6 13h1v1h-1z"/><path fill="#f4ee98" d="M5 6h1v1h-1zM1 7h1v1h-1zM5 7h1v1h-1zM8 7h1v1h-1zM3 8h1v1h-1zM8 8h1v1h-1zM1 9h1v1h-1zM3 9h1v1h-1zM8 9h1v1h-1zM2 10h1v1h-1zM7 10h1v1h-1zM1 11h1v1h-1zM4 11h1v1h-1zM6 11h1v1h-1zM9 11h1v1h-1zM4 12h1v1h-1zM6 12h1v1h-1z"/><path fill="#a0a030" d="M6 6h1v1h-1zM3 7h1v1h-1zM6 7h1v1h-1zM2 8h1v1h-1zM4 8h1v1h-1zM7 8h1v1h-1zM2 9h1v1h-1zM7 9h1v1h-1zM9 9h1v1h-1zM3 10h1v1h-1zM8 10h1v1h-1zM3 11h1v1h-1zM7 11h1v1h-1zM5 12h1v1h-1z"/></svg>
<svg class="abs" style="left:9px;top:109px" width="9" height="9" shape-rendering="crispEdges"><path fill="#808080" d="M0 0h9v1h-9zM0 1h1v1h-1zM8 1h1v1h-1zM0 2h1v1h-1zM8 2h1v1h-1zM0 3h1v1h-1zM8 3h1v1h-1zM0 4h1v1h-1zM8 4h1v1h-1zM0 5h1v1h-1zM8 5h1v1h-1zM0 6h1v1h-1zM8 6h1v1h-1zM0 7h1v1h-1zM8 7h1v1h-1zM0 8h9v1h-9z"/><path fill="#fff" d="M1 1h7v1h-7zM1 2h3v1h-3zM5 2h3v1h-3zM1 3h3v1h-3zM5 3h3v1h-3zM1 4h1v1h-1zM7 4h1v1h-1zM1 5h3v1h-3zM5 5h3v1h-3zM1 6h3v1h-3zM5 6h3v1h-3zM1 7h7v1h-7z"/><path fill="#000" d="M4 2h1v1h-1zM4 3h1v1h-1zM2 4h5v1h-5zM4 5h1v1h-1zM4 6h1v1h-1z"/></svg>
<svg class="abs" style="left:0;top:0" width="60" height="130" shape-rendering="crispEdges"><rect x="13" y="89" width="1" height="1" fill="#808080"/><rect x="13" y="91" width="1" height="1" fill="#808080"/><rect x="13" y="93" width="1" height="1" fill="#808080"/><rect x="13" y="95" width="1" height="1" fill="#808080"/><rect x="13" y="97" width="1" height="1" fill="#808080"/><rect x="13" y="99" width="1" height="1" fill="#808080"/><rect x="13" y="101" width="1" height="1" fill="#808080"/><rect x="13" y="103" width="1" height="1" fill="#808080"/><rect x="13" y="105" width="1" height="1" fill="#808080"/><rect x="13" y="107" width="1" height="1" fill="#808080"/><rect x="13" y="109" width="1" height="1" fill="#808080"/><rect x="15" y="97" width="1" height="1" fill="#808080"/><rect x="17" y="97" width="1" height="1" fill="#808080"/><rect x="19" y="97" width="1" height="1" fill="#808080"/><rect x="21" y="97" width="1" height="1" fill="#808080"/><rect x="23" y="97" width="1" height="1" fill="#808080"/><rect x="19" y="113" width="1" height="1" fill="#808080"/><rect x="21" y="113" width="1" height="1" fill="#808080"/><rect x="23" y="113" width="1" height="1" fill="#808080"/></svg>
<svg class="abs" style="left:212px;top:76px" width="13" height="17" shape-rendering="crispEdges"><path fill="#ffff00" d="M9 0h1v1h-1zM7 1h1v1h-1zM9 1h1v1h-1zM11 1h1v1h-1zM8 2h3v1h-3zM7 3h5v1h-5zM8 4h3v1h-3zM7 5h1v1h-1zM9 5h1v1h-1zM11 5h1v1h-1z"/><path fill="#000" d="M1 3h6v1h-6zM1 4h1v1h-1zM1 5h1v1h-1zM8 5h1v1h-1zM1 6h1v1h-1zM9 6h1v1h-1zM1 7h1v1h-1zM9 7h1v1h-1zM1 8h1v1h-1zM9 8h1v1h-1zM1 9h1v1h-1zM9 9h1v1h-1zM1 10h1v1h-1zM9 10h1v1h-1zM1 11h1v1h-1zM9 11h1v1h-1zM1 12h1v1h-1zM9 12h1v1h-1zM1 13h1v1h-1zM9 13h1v1h-1zM1 14h1v1h-1zM9 14h1v1h-1zM1 15h1v1h-1zM9 15h1v1h-1zM1 16h9v1h-9z"/><path fill="#fff" d="M2 4h6v1h-6zM2 5h5v1h-5zM2 6h7v1h-7zM2 7h7v1h-7zM2 8h7v1h-7zM2 9h7v1h-7zM2 10h7v1h-7zM2 11h7v1h-7zM2 12h7v1h-7zM2 13h7v1h-7zM2 14h7v1h-7zM2 15h7v1h-7z"/></svg>
<svg class="abs" style="left:241px;top:78px" width="17" height="14" shape-rendering="crispEdges"><path fill="#000" d="M3 0h1v1h-1zM5 0h1v1h-1zM7 0h1v1h-1zM9 0h1v1h-1zM11 0h1v1h-1zM13 0h1v1h-1zM1 1h3v1h-3zM5 1h1v1h-1zM7 1h1v1h-1zM9 1h1v1h-1zM11 1h1v1h-1zM13 1h2v1h-2zM1 2h1v1h-1zM14 2h2v1h-2zM1 3h1v1h-1zM14 3h1v1h-1zM16 3h1v1h-1zM1 4h1v1h-1zM14 4h1v1h-1zM16 4h1v1h-1zM1 5h1v1h-1zM14 5h1v1h-1zM16 5h1v1h-1zM1 6h1v1h-1zM14 6h1v1h-1zM16 6h1v1h-1zM1 7h1v1h-1zM14 7h1v1h-1zM16 7h1v1h-1zM1 8h1v1h-1zM14 8h1v1h-1zM16 8h1v1h-1zM1 9h1v1h-1zM11 9h4v1h-4zM16 9h1v1h-1zM1 10h1v1h-1zM11 10h1v1h-1zM13 10h1v1h-1zM16 10h1v1h-1zM1 11h12v1h-12zM15 11h1v1h-1zM2 12h1v1h-1zM14 12h1v1h-1zM3 13h11v1h-11z"/><path fill="#fff" d="M4 1h1v1h-1zM6 1h1v1h-1zM8 1h1v1h-1zM10 1h1v1h-1zM12 1h1v1h-1zM2 2h12v1h-12zM2 3h12v1h-12zM2 4h12v1h-12zM2 5h12v1h-12zM2 6h12v1h-12zM2 7h12v1h-12zM2 8h12v1h-12zM2 9h9v1h-9zM2 10h9v1h-9zM12 10h1v1h-1z"/><path fill="#808080" d="M15 3h1v1h-1zM15 4h1v1h-1zM15 5h1v1h-1zM15 6h1v1h-1zM15 7h1v1h-1zM15 8h1v1h-1zM15 9h1v1h-1zM14 10h2v1h-2zM13 11h2v1h-2zM3 12h11v1h-11z"/></svg>
<svg class="abs" style="left:273px;top:78px" width="15" height="15" shape-rendering="crispEdges"><path fill="#ff0000" d="M8 0h1v1h-1zM8 1h1v1h-1zM3 2h1v1h-1zM8 2h1v1h-1zM10 2h2v1h-2zM8 3h1v1h-1zM12 3h1v1h-1zM6 4h1v1h-1zM8 4h1v1h-1zM8 5h1v1h-1zM7 6h2v1h-2zM8 7h1v1h-1zM8 8h1v1h-1zM8 9h1v1h-1zM8 10h1v1h-1zM8 11h1v1h-1zM8 12h1v1h-1zM8 13h1v1h-1zM8 14h1v1h-1z"/><path fill="#0000ff" d="M4 2h2v1h-2zM4 3h1v1h-1zM6 3h1v1h-1zM9 3h1v1h-1zM3 4h1v1h-1zM7 4h1v1h-1zM9 4h1v1h-1zM2 5h1v1h-1zM7 5h1v1h-1zM9 5h1v1h-1zM11 5h1v1h-1zM1 6h1v1h-1zM12 6h1v1h-1zM13 7h1v1h-1z"/></svg>
<svg class="abs" style="left:297px;top:78px" width="13" height="15" shape-rendering="crispEdges"><path fill="#000" d="M4 0h5v1h-5zM2 1h2v1h-2zM9 1h2v1h-2zM1 2h1v1h-1zM11 2h1v1h-1zM0 3h1v1h-1zM12 3h1v1h-1zM0 4h2v1h-2zM11 4h2v1h-2zM0 5h1v1h-1zM2 5h2v1h-2zM9 5h2v1h-2zM12 5h1v1h-1zM0 6h1v1h-1zM4 6h5v1h-5zM12 6h1v1h-1zM0 7h1v1h-1zM12 7h1v1h-1zM0 8h1v1h-1zM12 8h1v1h-1zM0 9h1v1h-1zM12 9h1v1h-1zM0 10h1v1h-1zM12 10h1v1h-1zM0 11h1v1h-1zM12 11h1v1h-1zM1 12h1v1h-1zM11 12h1v1h-1zM2 13h2v1h-2zM9 13h2v1h-2zM4 14h5v1h-5z"/><path fill="#fff" d="M4 1h5v1h-5zM2 2h9v1h-9zM1 3h11v1h-11zM2 4h9v1h-9zM4 5h5v1h-5zM3 6h1v1h-1zM3 7h1v1h-1zM3 8h1v1h-1zM3 9h1v1h-1zM3 10h1v1h-1zM3 11h1v1h-1zM3 12h1v1h-1z"/><path fill="#c0c0c0" d="M1 5h1v1h-1zM1 6h2v1h-2zM9 6h1v1h-1zM1 7h2v1h-2zM4 7h6v1h-6zM1 8h2v1h-2zM4 8h6v1h-6zM1 9h2v1h-2zM4 9h6v1h-6zM1 10h2v1h-2zM4 10h6v1h-6zM1 11h2v1h-2zM4 11h6v1h-6zM2 12h1v1h-1zM4 12h6v1h-6zM4 13h5v1h-5z"/><path fill="#808080" d="M11 5h1v1h-1zM10 6h2v1h-2zM10 7h2v1h-2zM10 8h2v1h-2zM10 9h2v1h-2zM10 10h2v1h-2zM10 11h2v1h-2zM10 12h1v1h-1z"/></svg>
<svg class="abs" style="left:326px;top:78px" width="17" height="14" shape-rendering="crispEdges"><path fill="#000" d="M3 0h1v1h-1zM5 0h1v1h-1zM7 0h1v1h-1zM9 0h1v1h-1zM11 0h1v1h-1zM13 0h1v1h-1zM1 1h3v1h-3zM5 1h1v1h-1zM7 1h1v1h-1zM9 1h1v1h-1zM11 1h1v1h-1zM13 1h2v1h-2zM1 2h1v1h-1zM14 2h2v1h-2zM1 3h1v1h-1zM14 3h1v1h-1zM16 3h1v1h-1zM1 4h1v1h-1zM14 4h1v1h-1zM16 4h1v1h-1zM1 5h1v1h-1zM14 5h1v1h-1zM16 5h1v1h-1zM1 6h1v1h-1zM14 6h1v1h-1zM16 6h1v1h-1zM1 7h1v1h-1zM14 7h1v1h-1zM16 7h1v1h-1zM1 8h1v1h-1zM14 8h1v1h-1zM16 8h1v1h-1zM1 9h1v1h-1zM11 9h4v1h-4zM16 9h1v1h-1zM1 10h1v1h-1zM11 10h1v1h-1zM13 10h1v1h-1zM16 10h1v1h-1zM1 11h12v1h-12zM15 11h1v1h-1zM2 12h1v1h-1zM14 12h1v1h-1zM3 13h11v1h-11z"/><path fill="#fff" d="M4 1h1v1h-1zM6 1h1v1h-1zM8 1h1v1h-1zM10 1h1v1h-1zM12 1h1v1h-1zM2 2h12v1h-12zM2 3h1v1h-1zM4 3h10v1h-10zM2 4h1v1h-1zM5 4h3v1h-3zM9 4h5v1h-5zM2 5h1v1h-1zM4 5h1v1h-1zM6 5h1v1h-1zM8 5h1v1h-1zM10 5h2v1h-2zM13 5h1v1h-1zM2 6h1v1h-1zM4 6h2v1h-2zM7 6h3v1h-3zM12 6h2v1h-2zM2 7h1v1h-1zM4 7h10v1h-10zM2 8h12v1h-12zM2 9h9v1h-9zM2 10h9v1h-9zM12 10h1v1h-1z"/><path fill="#ff0000" d="M3 3h1v1h-1zM3 4h1v1h-1zM3 5h1v1h-1zM3 6h1v1h-1zM3 7h1v1h-1z"/><path fill="#808080" d="M15 3h1v1h-1zM15 4h1v1h-1zM15 5h1v1h-1zM15 6h1v1h-1zM15 7h1v1h-1zM15 8h1v1h-1zM15 9h1v1h-1zM14 10h2v1h-2zM13 11h2v1h-2zM3 12h11v1h-11z"/><path fill="#0000ff" d="M4 4h1v1h-1zM8 4h1v1h-1zM5 5h1v1h-1zM7 5h1v1h-1zM9 5h1v1h-1zM12 5h1v1h-1zM6 6h1v1h-1zM10 6h2v1h-2z"/></svg>
<svg class="abs" style="left:349px;top:78px" width="17" height="14" shape-rendering="crispEdges"><path fill="#000" d="M3 0h1v1h-1zM5 0h1v1h-1zM7 0h1v1h-1zM9 0h1v1h-1zM11 0h1v1h-1zM13 0h1v1h-1zM1 1h3v1h-3zM5 1h1v1h-1zM7 1h1v1h-1zM9 1h1v1h-1zM11 1h1v1h-1zM13 1h2v1h-2zM1 2h1v1h-1zM14 2h2v1h-2zM1 3h1v1h-1zM14 3h1v1h-1zM16 3h1v1h-1zM1 4h1v1h-1zM14 4h1v1h-1zM16 4h1v1h-1zM1 5h1v1h-1zM14 5h1v1h-1zM16 5h1v1h-1zM1 6h1v1h-1zM14 6h1v1h-1zM16 6h1v1h-1zM1 7h1v1h-1zM14 7h1v1h-1zM16 7h1v1h-1zM1 8h1v1h-1zM14 8h1v1h-1zM16 8h1v1h-1zM1 9h1v1h-1zM11 9h4v1h-4zM16 9h1v1h-1zM1 10h1v1h-1zM11 10h1v1h-1zM13 10h1v1h-1zM16 10h1v1h-1zM1 11h12v1h-12zM15 11h1v1h-1zM2 12h1v1h-1zM14 12h1v1h-1zM3 13h11v1h-11z"/><path fill="#fff" d="M4 1h1v1h-1zM6 1h1v1h-1zM8 1h1v1h-1zM10 1h1v1h-1zM12 1h1v1h-1zM2 2h12v1h-12zM2 3h12v1h-12zM2 4h1v1h-1zM5 4h3v1h-3zM10 4h1v1h-1zM13 4h1v1h-1zM2 5h1v1h-1zM5 5h3v1h-3zM13 5h1v1h-1zM2 6h1v1h-1zM7 6h1v1h-1zM13 6h1v1h-1zM2 7h1v1h-1zM13 7h1v1h-1zM2 8h1v1h-1zM13 8h1v1h-1zM2 9h9v1h-9zM2 10h9v1h-9zM12 10h1v1h-1z"/><path fill="#808080" d="M15 3h1v1h-1zM15 4h1v1h-1zM15 5h1v1h-1zM15 6h1v1h-1zM15 7h1v1h-1zM15 8h1v1h-1zM15 9h1v1h-1zM14 10h2v1h-2zM13 11h2v1h-2zM3 12h11v1h-11z"/><path fill="#ff0000" d="M3 4h2v1h-2zM11 4h2v1h-2zM3 5h2v1h-2zM11 5h2v1h-2zM3 6h2v1h-2zM3 7h2v1h-2zM3 8h2v1h-2z"/><path fill="#00c000" d="M8 4h2v1h-2zM8 5h2v1h-2zM8 6h2v1h-2zM7 7h2v1h-2zM7 8h2v1h-2z"/><path fill="#ffff00" d="M10 5h1v1h-1zM10 6h1v1h-1zM9 7h2v1h-2zM9 8h2v1h-2z"/><path fill="#000080" d="M5 6h2v1h-2zM5 7h2v1h-2zM5 8h2v1h-2z"/><path fill="#a000a0" d="M11 6h2v1h-2zM11 7h2v1h-2zM11 8h2v1h-2z"/></svg>
<svg class="abs" style="left:372px;top:78px" width="17" height="14" shape-rendering="crispEdges"><path fill="#000" d="M3 0h1v1h-1zM5 0h1v1h-1zM7 0h1v1h-1zM9 0h1v1h-1zM11 0h1v1h-1zM13 0h1v1h-1zM1 1h3v1h-3zM5 1h1v1h-1zM7 1h1v1h-1zM9 1h1v1h-1zM11 1h1v1h-1zM13 1h2v1h-2zM1 2h1v1h-1zM14 2h2v1h-2zM1 3h1v1h-1zM14 3h1v1h-1zM16 3h1v1h-1zM1 4h1v1h-1zM3 4h10v1h-10zM14 4h1v1h-1zM16 4h1v1h-1zM1 5h1v1h-1zM14 5h1v1h-1zM16 5h1v1h-1zM1 6h1v1h-1zM3 6h10v1h-10zM14 6h1v1h-1zM16 6h1v1h-1zM1 7h1v1h-1zM14 7h1v1h-1zM16 7h1v1h-1zM1 8h1v1h-1zM3 8h10v1h-10zM14 8h1v1h-1zM16 8h1v1h-1zM1 9h1v1h-1zM11 9h4v1h-4zM16 9h1v1h-1zM1 10h1v1h-1zM11 10h1v1h-1zM13 10h1v1h-1zM16 10h1v1h-1zM1 11h12v1h-12zM15 11h1v1h-1zM2 12h1v1h-1zM14 12h1v1h-1zM3 13h11v1h-11z"/><path fill="#fff" d="M4 1h1v1h-1zM6 1h1v1h-1zM8 1h1v1h-1zM10 1h1v1h-1zM12 1h1v1h-1zM2 2h12v1h-12zM2 3h12v1h-12zM2 4h1v1h-1zM13 4h1v1h-1zM2 5h12v1h-12zM2 6h1v1h-1zM13 6h1v1h-1zM2 7h12v1h-12zM2 8h1v1h-1zM13 8h1v1h-1zM2 9h9v1h-9zM2 10h9v1h-9zM12 10h1v1h-1z"/><path fill="#808080" d="M15 3h1v1h-1zM15 4h1v1h-1zM15 5h1v1h-1zM15 6h1v1h-1zM15 7h1v1h-1zM15 8h1v1h-1zM15 9h1v1h-1zM14 10h2v1h-2zM13 11h2v1h-2zM3 12h11v1h-11z"/></svg>
<svg class="abs" style="left:400px;top:75px" width="23" height="22" shape-rendering="crispEdges"><rect x="6" y="10" width="12" height="2" fill="#000"/><rect x="11" y="4" width="2" height="13" fill="#000"/></svg>
<svg class="abs" style="left:423px;top:75px" width="23" height="22"><path d="M5 4 L7 4 L18 16" stroke="#000" stroke-width="1.2" fill="none"/><path d="M17.5 4.5 L6 14.5" stroke="#000" stroke-width="2.2" fill="none"/></svg>
<svg class="abs" style="left:446px;top:75px" width="23" height="22"><circle cx="11" cy="10" r="4.2" fill="#ffff00" stroke="#000" stroke-width="1"/><rect x="9" y="14" width="4" height="1" fill="#000"/><rect x="9" y="15" width="4" height="1" fill="#fff"/><rect x="9" y="16" width="4" height="1" fill="#000"/><rect x="10" y="17" width="2" height="1" fill="#000"/></svg>
<svg class="abs" style="left:481px;top:80px" width="15" height="12" shape-rendering="crispEdges"><path fill="#000" d="M0 0h6v1h-6zM0 1h1v1h-1zM5 1h2v1h-2zM0 2h1v1h-1zM2 2h2v1h-2zM5 2h1v1h-1zM7 2h1v1h-1zM0 3h1v1h-1zM5 3h3v1h-3zM0 4h1v1h-1zM2 4h3v1h-3zM0 5h1v1h-1zM0 6h1v1h-1zM2 6h4v1h-4zM0 7h1v1h-1zM0 8h7v1h-7z"/><path fill="#fff" d="M1 1h4v1h-4zM1 2h1v1h-1zM4 2h1v1h-1zM6 2h1v1h-1zM1 3h4v1h-4zM1 4h1v1h-1zM5 4h2v1h-2zM8 4h3v1h-3zM1 5h6v1h-6zM8 5h1v1h-1zM10 5h1v1h-1zM12 5h1v1h-1zM1 6h1v1h-1zM6 6h1v1h-1zM8 6h3v1h-3zM1 7h6v1h-6zM8 7h1v1h-1zM11 7h3v1h-3zM8 8h6v1h-6zM8 9h1v1h-1zM13 9h1v1h-1zM8 10h6v1h-6z"/><path fill="#000080" d="M8 3h5v1h-5zM7 4h1v1h-1zM11 4h2v1h-2zM7 5h1v1h-1zM9 5h1v1h-1zM11 5h1v1h-1zM13 5h1v1h-1zM7 6h1v1h-1zM11 6h4v1h-4zM7 7h1v1h-1zM9 7h2v1h-2zM14 7h1v1h-1zM7 8h1v1h-1zM14 8h1v1h-1zM7 9h1v1h-1zM9 9h4v1h-4zM14 9h1v1h-1zM7 10h1v1h-1zM14 10h1v1h-1zM7 11h8v1h-8z"/></svg>
<svg class="abs" style="left:503px;top:79px" width="15" height="13" shape-rendering="crispEdges"><path fill="#000" d="M5 0h4v1h-4zM4 1h1v1h-1zM9 1h1v1h-1zM1 2h12v1h-12zM1 3h1v1h-1zM12 3h1v1h-1zM1 4h1v1h-1zM12 4h1v1h-1zM1 5h1v1h-1zM12 5h1v1h-1zM1 6h1v1h-1zM1 7h1v1h-1zM1 8h1v1h-1zM1 9h1v1h-1zM1 10h1v1h-1zM1 11h6v1h-6z"/><path fill="#c0c0c0" d="M5 1h1v1h-1zM8 1h1v1h-1z"/><path fill="#fff" d="M6 1h2v1h-2zM8 7h6v1h-6zM8 8h1v1h-1zM13 8h1v1h-1zM8 9h6v1h-6zM8 10h1v1h-1zM13 10h1v1h-1zM8 11h6v1h-6z"/><path fill="#808000" d="M2 3h10v1h-10zM2 4h10v1h-10zM2 5h10v1h-10zM2 6h5v1h-5zM2 7h5v1h-5zM2 8h5v1h-5zM2 9h5v1h-5zM2 10h5v1h-5z"/><path fill="#808080" d="M7 6h8v1h-8zM7 7h1v1h-1zM14 7h1v1h-1zM7 8h1v1h-1zM9 8h4v1h-4zM14 8h1v1h-1zM7 9h1v1h-1zM14 9h1v1h-1zM7 10h1v1h-1zM9 10h4v1h-4zM14 10h1v1h-1zM7 11h1v1h-1zM14 11h1v1h-1zM7 12h8v1h-8z"/></svg>
<svg class="abs" style="left:526px;top:78px" width="16" height="14" shape-rendering="crispEdges"><path fill="#000" d="M2 0h1v1h-1zM4 0h1v1h-1zM6 0h1v1h-1zM1 1h2v1h-2zM4 1h1v1h-1zM6 1h1v1h-1zM8 1h1v1h-1zM1 2h1v1h-1zM7 2h1v1h-1zM1 3h1v1h-1zM6 3h1v1h-1zM10 3h2v1h-2zM1 4h1v1h-1zM5 4h1v1h-1zM9 4h4v1h-4zM14 4h1v1h-1zM1 5h1v1h-1zM4 5h1v1h-1zM8 5h1v1h-1zM12 5h1v1h-1zM14 5h1v1h-1zM1 6h1v1h-1zM5 6h6v1h-6zM12 6h1v1h-1zM14 6h1v1h-1zM1 7h1v1h-1zM3 7h5v1h-5zM10 7h1v1h-1zM12 7h1v1h-1zM14 7h1v1h-1zM1 8h1v1h-1zM3 8h1v1h-1zM6 8h1v1h-1zM8 8h3v1h-3zM12 8h1v1h-1zM14 8h1v1h-1zM1 9h1v1h-1zM3 9h5v1h-5zM10 9h3v1h-3zM14 9h1v1h-1zM1 10h1v1h-1zM3 10h1v1h-1zM6 10h1v1h-1zM9 10h2v1h-2zM13 10h1v1h-1zM1 11h9v1h-9zM12 11h1v1h-1zM2 12h1v1h-1zM11 12h1v1h-1zM3 13h8v1h-8z"/><path fill="#808080" d="M10 0h3v1h-3zM9 1h1v1h-1zM13 1h1v1h-1zM8 2h1v1h-1zM14 2h1v1h-1zM7 3h1v1h-1zM13 3h2v1h-2zM6 4h1v1h-1zM13 4h1v1h-1zM5 5h1v1h-1zM13 5h1v1h-1zM13 6h1v1h-1zM13 7h1v1h-1zM13 8h1v1h-1zM13 9h1v1h-1zM11 10h2v1h-2zM10 11h2v1h-2zM3 12h8v1h-8z"/><path fill="#fff" d="M3 1h1v1h-1zM5 1h1v1h-1zM7 1h1v1h-1zM11 1h1v1h-1zM2 2h5v1h-5zM10 2h3v1h-3zM2 3h4v1h-4zM9 3h1v1h-1zM2 4h3v1h-3zM8 4h1v1h-1zM2 5h2v1h-2zM7 5h1v1h-1zM9 5h3v1h-3zM2 6h3v1h-3zM11 6h1v1h-1zM2 7h1v1h-1zM8 7h2v1h-2zM11 7h1v1h-1zM2 8h1v1h-1zM4 8h2v1h-2zM7 8h1v1h-1zM11 8h1v1h-1zM2 9h1v1h-1zM8 9h2v1h-2zM2 10h1v1h-1zM4 10h2v1h-2zM7 10h2v1h-2z"/><path fill="#c0c0c0" d="M10 1h1v1h-1zM12 1h1v1h-1zM9 2h1v1h-1zM13 2h1v1h-1zM8 3h1v1h-1zM12 3h1v1h-1zM7 4h1v1h-1zM6 5h1v1h-1z"/></svg>
<svg class="abs" style="left:554px;top:75px" width="23" height="22"><circle cx="11" cy="10.4" r="7.3" fill="#f40808" stroke="#700000" stroke-width="0.9"/><path d="M8.7 8 L13.3 12.6 M13.3 8 L8.7 12.6" stroke="#fff" stroke-width="1.7"/></svg>
<svg class="abs" style="left:581px;top:81px" width="15" height="9" shape-rendering="crispEdges"><path fill="#808080" d="M4 0h4v1h-4zM2 1h3v1h-3zM7 1h7v1h-7zM1 2h14v1h-14zM1 3h3v1h-3zM5 3h2v1h-2zM9 3h2v1h-2zM12 3h3v1h-3zM1 4h2v1h-2zM4 4h2v1h-2zM10 4h2v1h-2zM13 4h2v1h-2zM1 5h5v1h-5zM10 5h5v1h-5zM1 6h2v1h-2zM4 6h3v1h-3zM9 6h2v1h-2zM12 6h3v1h-3zM1 7h14v1h-14z"/><path fill="#c0c0c0" d="M5 1h2v1h-2zM4 3h1v1h-1zM11 3h1v1h-1zM3 4h1v1h-1zM7 4h2v1h-2zM12 4h1v1h-1zM7 5h2v1h-2zM3 6h1v1h-1zM11 6h1v1h-1z"/><path fill="#fff" d="M7 3h2v1h-2zM6 4h1v1h-1zM9 4h1v1h-1zM6 5h1v1h-1zM9 5h1v1h-1zM7 6h2v1h-2zM2 8h12v1h-12z"/></svg>
<svg class="abs" style="left:3px;top:1002px" width="18" height="16" viewBox="0 0 16 15"><path d="M2 2 C4 0.5 6 1 7.5 2 L6.5 7 C5 6 3 6 1 7 Z" fill="#e8501c"/><path d="M8.5 2.5 C10 3.5 12 3.5 14.5 2 L13 7.5 C11 8.5 9 8.5 7.5 7.5 Z" fill="#58b020"/><path d="M1 8 C3 7 5 7 6.3 8 L5.3 13 C4 12 2 12 0 13 Z" fill="#3860d0"/><path d="M7.3 8.5 C9 9.5 11 9.5 12.8 8.5 L11.8 13.5 C10 14.5 8 14.5 6.3 13.5 Z" fill="#f0c818"/></svg>
<svg class="abs" style="left:70px;top:1002px" width="17" height="17"><path d="M2 5 L12 2 L14 11 L4 15 Z" fill="#e8f4ff" stroke="#2858a8" stroke-width="1.5"/><path d="M6 9 L10 7.5 M8 6 L8.5 11" stroke="#2858a8" stroke-width="1.3"/><path d="M3 15 L13 12" stroke="#606060" stroke-width="1"/></svg>
<svg class="abs" style="left:93px;top:1002px" width="18" height="17"><circle cx="9" cy="9" r="6" fill="#38a0e8"/><path d="M5 9 L13 9" stroke="#e8f4ff" stroke-width="1.6"/><circle cx="9" cy="8.5" r="2.6" fill="none" stroke="#e8f4ff" stroke-width="1.4"/><path d="M1.5 14 C5 15 14 8 16 3" stroke="#2878c8" stroke-width="1.3" fill="none"/></svg>
<svg class="abs" style="left:154px;top:1005px" width="16" height="12" shape-rendering="crispEdges"><path fill="#000" d="M2 0h2v1h-2zM5 0h1v1h-1zM7 0h1v1h-1zM10 0h3v1h-3zM1 1h1v1h-1zM4 1h1v1h-1zM6 1h1v1h-1zM8 1h2v1h-2zM13 1h1v1h-1zM2 2h2v1h-2zM5 2h1v1h-1zM7 2h1v1h-1zM12 2h3v1h-3zM1 3h4v1h-4zM10 3h1v1h-1zM13 3h1v1h-1zM0 4h1v1h-1zM2 4h2v1h-2zM5 4h1v1h-1zM9 4h3v1h-3zM2 5h2v1h-2zM6 5h1v1h-1zM8 5h1v1h-1zM10 5h1v1h-1zM12 5h1v1h-1zM1 6h1v1h-1zM4 6h1v1h-1zM9 6h4v1h-4zM0 7h1v1h-1zM5 7h1v1h-1zM8 7h2v1h-2zM12 7h2v1h-2zM2 8h2v1h-2zM8 8h1v1h-1zM10 8h2v1h-2zM13 8h1v1h-1zM1 9h1v1h-1zM4 9h3v1h-3zM8 9h1v1h-1zM10 9h2v1h-2zM13 9h1v1h-1zM0 10h1v1h-1zM2 10h2v1h-2zM6 10h1v1h-1zM8 10h2v1h-2zM12 10h2v1h-2zM1 11h4v1h-4zM9 11h4v1h-4z"/><path fill="#fff" d="M2 1h2v1h-2zM10 7h2v1h-2zM9 8h1v1h-1zM12 8h1v1h-1zM9 9h1v1h-1zM12 9h1v1h-1zM10 10h2v1h-2z"/></svg>
<svg class="abs" style="left:318px;top:1005px" width="16" height="11" shape-rendering="crispEdges"><path fill="#000" d="M2 0h12v1h-12zM2 1h1v1h-1zM13 1h1v1h-1zM2 2h1v1h-1zM4 2h8v1h-8zM13 2h1v1h-1zM2 3h1v1h-1zM4 3h1v1h-1zM6 3h2v1h-2zM9 3h3v1h-3zM13 3h1v1h-1zM2 4h1v1h-1zM4 4h2v1h-2zM7 4h2v1h-2zM11 4h1v1h-1zM13 4h1v1h-1zM2 5h1v1h-1zM4 5h8v1h-8zM13 5h1v1h-1zM2 6h1v1h-1zM13 6h1v1h-1zM2 7h12v1h-12zM1 8h1v1h-1zM14 8h1v1h-1zM0 9h1v1h-1zM2 9h1v1h-1zM4 9h1v1h-1zM6 9h1v1h-1zM8 9h1v1h-1zM10 9h1v1h-1zM12 9h1v1h-1zM15 9h1v1h-1zM0 10h16v1h-16z"/><path fill="#c0c0c0" d="M3 1h10v1h-10zM3 2h1v1h-1zM12 2h1v1h-1zM3 3h1v1h-1zM12 3h1v1h-1zM3 4h1v1h-1zM12 4h1v1h-1zM3 5h1v1h-1zM12 5h1v1h-1zM3 6h10v1h-10zM2 8h12v1h-12zM1 9h1v1h-1zM3 9h1v1h-1zM5 9h1v1h-1zM7 9h1v1h-1zM9 9h1v1h-1zM11 9h1v1h-1zM13 9h2v1h-2z"/><path fill="#00c000" d="M5 3h1v1h-1zM8 3h1v1h-1zM6 4h1v1h-1zM9 4h2v1h-2z"/></svg>
<svg class="abs" style="left:482px;top:1006px" width="15" height="9" shape-rendering="crispEdges"><path fill="#000" d="M1 0h5v1h-5zM0 1h1v1h-1zM6 1h6v1h-6zM0 2h1v1h-1zM11 2h1v1h-1zM0 3h1v1h-1zM3 3h12v1h-12zM0 4h1v1h-1zM2 4h1v1h-1zM14 4h1v1h-1zM0 5h1v1h-1zM2 5h1v1h-1zM14 5h1v1h-1zM0 6h2v1h-2zM13 6h1v1h-1zM0 7h1v1h-1zM12 7h1v1h-1zM0 8h12v1h-12z"/><path fill="#f4ee98" d="M1 1h5v1h-5zM1 2h10v1h-10zM1 3h2v1h-2zM1 4h1v1h-1zM1 5h1v1h-1z"/><path fill="#a0a030" d="M3 4h11v1h-11zM3 5h6v1h-6zM12 5h2v1h-2zM2 6h7v1h-7zM12 6h1v1h-1zM1 7h11v1h-11z"/><path fill="#fff" d="M9 5h3v1h-3zM9 6h3v1h-3z"/></svg>
<svg class="abs" style="left:1126px;top:1000px" width="152" height="22"><rect x="6" y="5" width="11" height="11" fill="#0a5a1a" shape-rendering="crispEdges"/><rect x="7" y="6" width="1" height="1" fill="#1c8a34" shape-rendering="crispEdges"/><rect x="9" y="6" width="1" height="1" fill="#1c8a34" shape-rendering="crispEdges"/><rect x="11" y="6" width="1" height="1" fill="#1c8a34" shape-rendering="crispEdges"/><rect x="13" y="6" width="1" height="1" fill="#1c8a34" shape-rendering="crispEdges"/><rect x="15" y="6" width="1" height="1" fill="#1c8a34" shape-rendering="crispEdges"/><rect x="7" y="8" width="1" height="1" fill="#1c8a34" shape-rendering="crispEdges"/><rect x="9" y="8" width="1" height="1" fill="#1c8a34" shape-rendering="crispEdges"/><rect x="11" y="8" width="1" height="1" fill="#1c8a34" shape-rendering="crispEdges"/><rect x="13" y="8" width="1" height="1" fill="#1c8a34" shape-rendering="crispEdges"/><rect x="15" y="8" width="1" height="1" fill="#1c8a34" shape-rendering="crispEdges"/><rect x="7" y="10" width="1" height="1" fill="#1c8a34" shape-rendering="crispEdges"/><rect x="9" y="10" width="1" height="1" fill="#1c8a34" shape-rendering="crispEdges"/><rect x="11" y="10" width="1" height="1" fill="#1c8a34" shape-rendering="crispEdges"/><rect x="13" y="10" width="1" height="1" fill="#1c8a34" shape-rendering="crispEdges"/><rect x="15" y="10" width="1" height="1" fill="#1c8a34" shape-rendering="crispEdges"/><rect x="7" y="12" width="1" height="1" fill="#1c8a34" shape-rendering="crispEdges"/><rect x="9" y="12" width="1" height="1" fill="#1c8a34" shape-rendering="crispEdges"/><rect x="11" y="12" width="1" height="1" fill="#1c8a34" shape-rendering="crispEdges"/><rect x="13" y="12" width="1" height="1" fill="#1c8a34" shape-rendering="crispEdges"/><rect x="15" y="12" width="1" height="1" fill="#1c8a34" shape-rendering="crispEdges"/><rect x="7" y="14" width="1" height="1" fill="#1c8a34" shape-rendering="crispEdges"/><rect x="9" y="14" width="1" height="1" fill="#1c8a34" shape-rendering="crispEdges"/><rect x="11" y="14" width="1" height="1" fill="#1c8a34" shape-rendering="crispEdges"/><rect x="13" y="14" width="1" height="1" fill="#1c8a34" shape-rendering="crispEdges"/><rect x="15" y="14" width="1" height="1" fill="#1c8a34" shape-rendering="crispEdges"/><rect x="27" y="3" width="8" height="7" rx="1" fill="#78b8f0" stroke="#4880c8" stroke-width="1"/><rect x="23" y="8" width="8" height="7" rx="1" fill="#90c8f8" stroke="#4880c8" stroke-width="1"/><rect x="24" y="16" width="9" height="2" fill="#6888c0"/><circle cx="45" cy="8.5" r="4.8" fill="#b8b8b8" stroke="#404040" stroke-width="1.2"/><circle cx="45" cy="8.5" r="1.8" fill="#e8e8e8" stroke="#505050" stroke-width="0.8"/><path d="M47 17 L54 10" stroke="#8890c0" stroke-width="1.6"/><path d="M59.5 3.5 L65 5 L70.5 3.5 L70.5 12 C70.5 15 67 17.5 65 18.5 C63 17.5 59.5 15 59.5 12 Z" fill="#fff" stroke="#1838a8" stroke-width="1.8"/><path d="M62.3 7 L65 14 L67.7 7" stroke="#d01818" stroke-width="1.8" fill="none"/><rect x="76" y="3" width="9" height="14" rx="2" fill="#f0f0f0" stroke="#404040" stroke-width="1"/><path d="M76 7.5 L85 7.5 M76 12 L85 12" stroke="#404040" stroke-width="1"/><circle cx="87" cy="14" r="4.6" fill="#fff" stroke="#202020" stroke-width="1"/><path d="M85.5 11.3 L85.5 16.7 L90 14 Z" fill="#18a030"/></svg>
<svg class="abs" style="left:1228px;top:2px" width="10" height="11" shape-rendering="crispEdges"><path fill="#000" d="M4 9h6v1h-6zM4 10h6v1h-6z"/></svg>
<svg class="abs" style="left:1226px;top:25px" width="10" height="11" shape-rendering="crispEdges"><path fill="#000" d="M4 9h6v1h-6zM4 10h6v1h-6z"/></svg>
<svg class="abs" style="left:1244px;top:2px" width="12" height="11" shape-rendering="crispEdges"><path fill="#000" d="M6 2h6v1h-6zM6 3h6v1h-6zM6 4h1v1h-1zM11 4h1v1h-1zM3 5h6v1h-6zM11 5h1v1h-1zM3 6h6v1h-6zM11 6h1v1h-1zM3 7h1v1h-1zM8 7h4v1h-4zM3 8h1v1h-1zM8 8h1v1h-1zM3 9h1v1h-1zM8 9h1v1h-1zM3 10h6v1h-6z"/></svg>
<svg class="abs" style="left:1242px;top:25px" width="12" height="11" shape-rendering="crispEdges"><path fill="#000" d="M6 2h6v1h-6zM6 3h6v1h-6zM6 4h1v1h-1zM11 4h1v1h-1zM3 5h6v1h-6zM11 5h1v1h-1zM3 6h6v1h-6zM11 6h1v1h-1zM3 7h1v1h-1zM8 7h4v1h-4zM3 8h1v1h-1zM8 8h1v1h-1zM3 9h1v1h-1zM8 9h1v1h-1zM3 10h6v1h-6z"/></svg>
<svg class="abs" style="left:1262px;top:2px" width="12" height="10" shape-rendering="crispEdges"><path fill="#000" d="M4 3h2v1h-2zM10 3h2v1h-2zM5 4h2v1h-2zM9 4h2v1h-2zM6 5h4v1h-4zM7 6h2v1h-2zM6 7h4v1h-4zM5 8h2v1h-2zM9 8h2v1h-2zM4 9h2v1h-2zM10 9h2v1h-2z"/></svg>
<svg class="abs" style="left:1260px;top:25px" width="12" height="10" shape-rendering="crispEdges"><path fill="#000" d="M4 3h2v1h-2zM10 3h2v1h-2zM5 4h2v1h-2zM9 4h2v1h-2zM6 5h4v1h-4zM7 6h2v1h-2zM6 7h4v1h-4zM5 8h2v1h-2zM9 8h2v1h-2zM4 9h2v1h-2zM10 9h2v1h-2z"/></svg>
<!-- status bar -->
<div class="sunk" style="left:0;top:978px;width:1060px;height:19px;"></div>
<div class="sunk" style="left:1062px;top:978px;width:131px;height:19px;"></div>
<div class="sunk" style="left:1195px;top:978px;width:83px;height:19px;"></div>
<!-- taskbar -->
<div style="left:61px;top:1002px;width:1px;height:18px;background:#fff;"></div><div style="left:62px;top:1002px;width:1px;height:18px;background:#808080;"></div>
<div style="left:143px;top:1002px;width:1px;height:18px;background:#fff;"></div><div style="left:144px;top:1002px;width:1px;height:18px;background:#808080;"></div>
<div style="left:0;top:997px;width:1280px;height:1px;background:#fff;"></div>
<div class="task" style="left:2px;width:52px;"><div class="t" style="left:19px;top:4px;font-weight:bold;letter-spacing:0.7px;">Start</div></div>
<div class="task" style="left:150px;width:159px;"><div class="t" style="letter-spacing:-0.22px;left:23px;">VERITAS Backup Exec - [...</div></div>
<div class="task" style="left:313px;width:160px;"><div class="t">Windows Task Manager</div></div>
<div class="task" style="left:477px;width:160px;"><div class="t">\\ua-kie-dc-01\f$\excbac...</div></div>
<div class="task" style="left:640px;width:159px;"><div class="t">Performance</div></div>
<div class="sunk" style="left:1126px;top:1000px;width:152px;height:22px;"></div>
<div class="t" style="left:1227px;top:1005px;letter-spacing:-0.25px;">4:44 PM</div>
</body></html>
